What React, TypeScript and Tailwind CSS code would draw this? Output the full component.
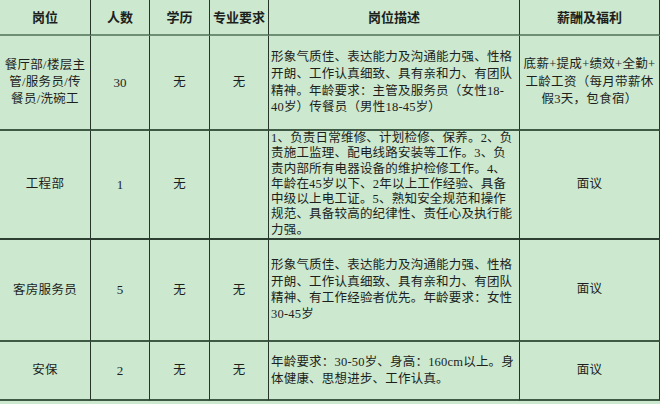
import * as React from "react";

const rows = [
  {
    id: "restaurant",
    pos: ["餐厅部/楼层主", "管/服务员/传", "餐员/洗碗工"],
    count: "30",
    edu: "无",
    major: "无",
    desc: [
      "形象气质佳、表达能力及沟通能力强、性格",
      "开朗、工作认真细致、具有亲和力、有团队",
      "精神。年龄要求：主管及服务员（女性18-",
      "40岁）传餐员（男性18-45岁）",
    ],
    pay: ["底薪+提成+绩效+全勤+", "工龄工资（每月带薪休", "假3天，包食宿）"],
    h: "h-[95px]",
    lh: "leading-[16.8px]",
    line: "border-[#3e5a44]",
  },
  {
    id: "engineering",
    pos: ["工程部"],
    count: "1",
    edu: "无",
    major: "",
    desc: [
      "1、负责日常维修、计划检修、保养。2、负",
      "责施工监理、配电线路安装等工作。3、负",
      "责内部所有电器设备的维护检修工作。4、",
      "年龄在45岁以下、2年以上工作经验、具备",
      "中级以上电工证。5、熟知安全规范和操作",
      "规范、具备较高的纪律性、责任心及执行能",
      "力强。",
    ],
    pay: ["面议"],
    h: "h-[109px]",
    lh: "leading-[15.2px]",
    line: "border-[#2c3f30]",
  },
  {
    id: "housekeeping",
    pos: ["客房服务员"],
    count: "5",
    edu: "无",
    major: "无",
    desc: [
      "形象气质佳、表达能力及沟通能力强、性格",
      "开朗、工作认真细致、具有亲和力、有团队",
      "精神、有工作经验者优先。年龄要求：女性",
      "30-45岁",
    ],
    pay: ["面议"],
    h: "h-[102px]",
    lh: "leading-[16.4px]",
    line: "border-[#3e5a44]",
  },
  {
    id: "security",
    pos: ["安保"],
    count: "2",
    edu: "无",
    major: "无",
    desc: ["年龄要求：30-50岁、身高：160cm以上。身", "体健康、思想进步、工作认真。"],
    pay: ["面议"],
    h: "h-[59px]",
    lh: "leading-[16.4px]",
    line: "border-[#3e5a44]",
  },
];

const headers = ["岗位", "人数", "学历", "专业要求", "岗位描述", "薪酬及福利"];

export default function App() {
  return (
    <div
      className="w-[660px] h-[404px] overflow-hidden bg-[#cce8cf] text-[#1c1f1c]"
      style={{ fontFamily: '"Liberation Serif", "Noto Sans CJK SC", serif' }}
    >
      <div className="grid grid-cols-[90px_59px_60px_59px_251px_141px]">
        {/* header */}
        {headers.map((h, i) => (
          <div
            key={h}
            className={[
              "h-[36px] flex items-center justify-center border-b-2 border-b-[#6f8f75] text-[13px] font-bold",
              i > 0 ? "border-l border-l-[#26342a]" : "",
              i === 5 ? "border-r border-r-[#26342a]" : "",
            ].join(" ")}
            style={{ fontFamily: '"Noto Sans CJK SC", sans-serif' }}
          >
            {h}
          </div>
        ))}

        {rows.map((r) => (
          <React.Fragment key={r.id}>
            <div className={`${r.h} flex flex-col items-center justify-center border-b-2 ${r.line} text-[12.5px] leading-[17px] tracking-[0.3px]`}>
              {r.pos.map((l) => (
                <div key={l} className="whitespace-nowrap">{l}</div>
              ))}
            </div>
            <div className={`${r.h} flex items-center justify-center border-l border-l-[#26342a] border-b-2 ${r.line} text-[13px]`}>
              {r.count}
            </div>
            <div className={`${r.h} flex items-center justify-center border-l border-l-[#26342a] border-b-2 ${r.line} text-[12.5px]`}>
              {r.edu}
            </div>
            <div className={`${r.h} flex items-center justify-center border-l border-l-[#26342a] border-b-2 ${r.line} text-[12.5px]`}>
              {r.major}
            </div>
            <div className={`${r.h} ${r.lh} flex flex-col justify-center pl-[2px] border-l border-l-[#26342a] border-b-2 ${r.line} text-[12.5px] tracking-[0.2px]`}>
              {r.desc.map((l, i) => (
                <div key={i} className="whitespace-nowrap">{l}</div>
              ))}
            </div>
            <div className={`${r.h} flex flex-col items-center justify-center border-l border-l-[#26342a] border-r border-r-[#26342a] border-b-2 ${r.line} text-[12.5px] leading-[17.5px] tracking-[0.3px]`}>
              {r.pay.map((l) => (
                <div key={l} className="whitespace-nowrap">{l}</div>
              ))}
            </div>
          </React.Fragment>
        ))}
      </div>
    </div>
  );
}
